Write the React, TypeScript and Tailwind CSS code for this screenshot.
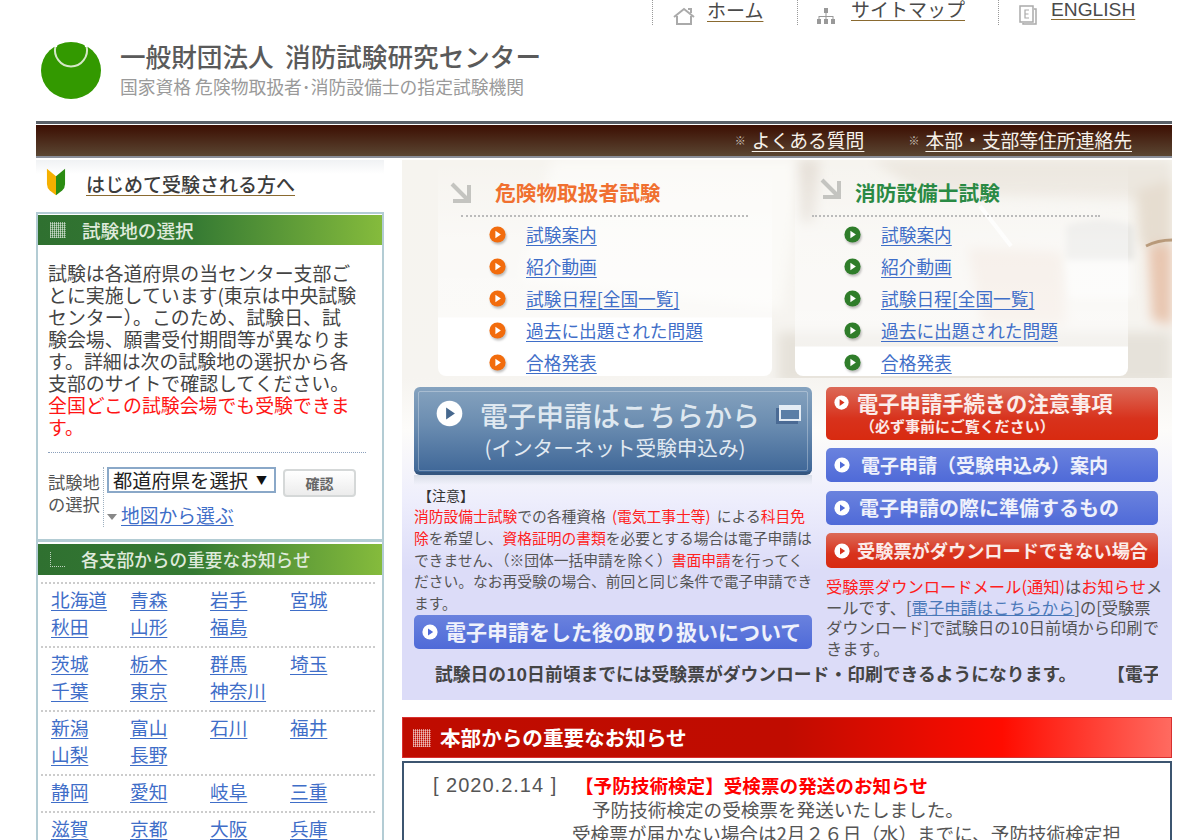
const jp = "font-['Noto_Sans_CJK_JP','Noto_Sans',sans-serif]";

function Play({ color = "#ffffff", fg = "#3f63c8", size = 18 }: { color?: string; fg?: string; size?: number }) {
  return (
    <svg width={size} height={size} viewBox="0 0 20 20" className="shrink-0">
      <circle cx="10" cy="10" r="9.5" fill={color} />
      <path d="M7.5 5.5 L14 10 L7.5 14.5 Z" fill={fg} />
    </svg>
  );
}

function Dots({ w = 16, h = 16 }: { w?: number; h?: number }) {
  return (
    <div
      className="shrink-0 bg-[repeating-linear-gradient(90deg,rgba(255,255,255,0.55)_0_1px,transparent_1px_2px),repeating-linear-gradient(0deg,rgba(255,255,255,0.35)_0_1px,transparent_1px_2px)]"
      style={{ width: w, height: h }}
    />
  );
}

const regionGroups = [
  [["北海道", "青森", "岩手", "宮城"], ["秋田", "山形", "福島"]],
  [["茨城", "栃木", "群馬", "埼玉"], ["千葉", "東京", "神奈川"]],
  [["新潟", "富山", "石川", "福井"], ["山梨", "長野"]],
  [["静岡", "愛知", "岐阜", "三重"]],
  [["滋賀", "京都", "大阪", "兵庫"]],
];

function ExamList({ orange }: { orange: boolean }) {
  const items = ["試験案内", "紹介動画", "試験日程[全国一覧]", "過去に出題された問題", "合格発表"];
  return (
    <ul className="flex flex-col gap-[6px]">
      {items.map((t) => (
        <li key={t} className="flex h-[26px] items-center text-[17.7px]">
          <span className="drop-shadow-[1px_2px_1px_rgba(0,0,0,0.25)]">
            <Play color={orange ? "#f26c0d" : "#2f7d2a"} fg="#ffffff" size={17} />
          </span>
          <a className="ml-[20px] text-[#3f6ec8] underline underline-offset-[3px]">{t}</a>
        </li>
      ))}
    </ul>
  );
}

function SmallBtn({ children, red, cls }: { children: React.ReactNode; red?: boolean; cls: string }) {
  return (
    <div
      className={`flex items-center rounded-[5px] pl-[8px] font-bold text-white/90 ${cls} ${
        red
          ? "bg-[linear-gradient(180deg,#dc6a58_0%,#d8321c_60%,#d82a10_100%)]"
          : "bg-[linear-gradient(180deg,#6a82de_0%,#4f6ad8_100%)]"
      }`}
    >
      {children}
    </div>
  );
}

function Arrow() {
  return (
    <svg width="21" height="21" viewBox="0 0 21 21" fill="none" stroke="currentColor" strokeWidth="4" className="block">
      <path d="M2 2 L18 18" />
      <path d="M19 3 V19 H3" />
    </svg>
  );
}

export default function App() {
  return (
    <div className={`${jp} h-[840px] w-[1200px] overflow-hidden bg-white text-[#444]`}>
      <div className="ml-[36px] w-[1136px]">
        {/* top nav */}
        <div className="flex h-[25px] text-[19px] text-[#4a4a4a]">
          <div className="ml-[616px] flex h-[25px] w-[145px] items-start border-l border-dotted border-[#999] pl-[20px]">
            <svg width="22" height="20" viewBox="0 0 22 20" className="mt-[6px]" fill="none" stroke="#aaa" strokeWidth="2">
              <path d="M1 11 L11 3 L21 11" />
              <path d="M4 10 V18 H18 V10" />
              <path d="M15 3 H18 V7" />
            </svg>
            <a className="-mt-[2px] ml-[12px] leading-[24px] underline decoration-[#8a6a30] underline-offset-[3px]">ホーム</a>
          </div>
          <div className="flex h-[25px] w-[201px] items-start border-l border-dotted border-[#999] pl-[18px]">
            <svg width="20" height="18" viewBox="0 0 20 18" className="mt-[7px]" fill="#999">
              <rect x="8" y="1" width="4" height="5" />
              <rect x="1" y="12" width="4" height="5" />
              <rect x="8" y="12" width="4" height="5" />
              <rect x="15" y="12" width="4" height="5" />
              <path d="M9.5 6 h1 v3 h7 v3 h-1 v-2 h-6 v2 h-1 v-2 h-6 v2 h-1 v-3 h7 z" />
            </svg>
            <a className="-mt-[3px] ml-[15px] leading-[24px] underline decoration-[#8a6a30] underline-offset-[3px]">サイトマップ</a>
          </div>
          <div className="flex h-[25px] items-start border-l border-dotted border-[#999] pl-[20px]">
            <svg width="18" height="20" viewBox="0 0 18 20" className="mt-[5px]" fill="none" stroke="#aaa" strokeWidth="1.5">
              <rect x="1" y="1" width="13" height="16" fill="#fff" />
              <path d="M15 4 H17 V19 H4 V18" />
              <path d="M10 5 H6 V13 H10 M6 9 H9.5" strokeWidth="1.2" />
            </svg>
            <a className="-mt-[2px] ml-[14px] font-['Liberation_Sans',sans-serif] text-[19.2px] leading-[24px] underline decoration-[#8a6a30] underline-offset-[3px]">ENGLISH</a>
          </div>
        </div>

        {/* logo */}
        <div className="flex h-[96px] items-start pl-[5px] pt-[16px]">
          <svg width="60" height="58" viewBox="0 0 60 58" className="shrink-0">
            <ellipse cx="30" cy="29.5" rx="30" ry="28.5" fill="#339900" />
            <path d="M14.5 5 A 16 16.5 0 1 0 45.5 5" fill="none" stroke="#d6e8c8" strokeWidth="2" />
            <path d="M11 0 L17 0 L16 6 L13.5 6 Z" fill="#ffffff" />
            <path d="M49 0 L43 0 L44 6 L46.5 6 Z" fill="#ffffff" />
          </svg>
          <div className="ml-[19px]">
            <div className="whitespace-nowrap text-[25.6px] font-medium leading-[30px] text-[#5a5a5a]">一般財団法人&nbsp;&nbsp;消防試験研究センター</div>
            <div className="mt-[3px] whitespace-nowrap text-[17.8px] leading-[24px] text-[#9a9a9a]">国家資格 危険物取扱者･消防設備士の指定試験機関</div>
          </div>
        </div>

        {/* dark bar */}
        <div className="h-[3px] bg-[#5a6068]" />
        <div className="h-[1px] bg-white" />
        <div className="flex h-[31px] items-center justify-end bg-[linear-gradient(180deg,#3c0e02_0%,#5a4632_100%)] pr-[40px] text-[18.8px] text-[#f6f1ea]">
          <span className="mr-[6px] text-[11px] text-[#c8c0b8]">※</span>
          <a className="underline underline-offset-[3px]">よくある質問</a>
          <span className="ml-[44px] mr-[6px] text-[11px] text-[#c8c0b8]">※</span>
          <a className="underline underline-offset-[3px]">本部・支部等住所連絡先</a>
        </div>
        <div className="h-[2px] bg-[#8a8f9a]" />
        <div className="h-[2px] bg-white" />

        {/* columns */}
        <div className="flex items-start">
          {/* left column */}
          <div className="w-[348px] shrink-0">
            <div className="flex h-[52px] items-start bg-[linear-gradient(180deg,#f0f2f4_0px,#ffffff_14px)] pl-[10px] pt-[7px]">
              <svg width="20" height="30" viewBox="0 0 21 30">
                <path d="M1 1 L10.5 9 V29 L4 24 Q1 21 1 17 Z" fill="#f5b000" />
                <path d="M20 1 L10.5 9 V29 L17 24 Q20 21 20 17 Z" fill="#2b8c12" />
              </svg>
              <a className="ml-[20px] mt-[4px] text-[19px] font-medium leading-[26px] text-[#3c3c3c] underline decoration-[#8a6a30] underline-offset-[3px]">はじめて受験される方へ</a>
            </div>
            <div className="border-2 border-b-[3px] border-[#b3ccd4] pt-[1px]">
              <div className="flex h-[30px] items-center bg-[linear-gradient(90deg,#2f7030_0%,#357a33_45%,#85bb3c_100%)] pl-[12px] text-[18.6px] font-medium text-[#dfeadb]">
                <Dots />
                <span className="ml-[16px]">試験地の選択</span>
              </div>
              <div className="pl-[10px] pt-[17px]">
                <p className="whitespace-nowrap text-[18.9px] leading-[22px] text-[#444]">
                  試験は各道府県の当センター支部ご<br />
                  とに実施しています(東京は中央試験<br />
                  センター）。このため、試験日、試<br />
                  験会場、願書受付期間等が異なりま<br />
                  す。詳細は次の試験地の選択から各<br />
                  支部のサイトで確認してください。<br />
                  <span className="text-[#ff1414]">全国どこの試験会場でも受験できま<br />す。</span>
                </p>
                <div className="mt-[14px] w-[318px] border-t border-dotted border-[#8ba0bc]" />
                <div className="mt-[14px] flex pb-[12px]">
                  <div className="w-[55px] shrink-0 pt-[4px] text-[17.3px] leading-[22px] text-[#555]">
                    試験地<br />の選択
                  </div>
                  <div className="border-l border-dotted border-[#9db0c0] pl-[3px]">
                    <div className="flex items-start">
                      <div className="flex h-[26px] w-[169px] items-center border-2 border-[#8aa8c8] pl-[4px] text-[19.3px] text-[#222]">
                        <span className="whitespace-nowrap">都道府県を選択</span>
                        <span className="ml-[8px] text-[11px] leading-none text-[#111]">▼</span>
                      </div>
                      <button className="ml-[7px] mt-[2px] h-[28px] w-[73px] rounded-[4px] border-2 border-[#d5d8d8] bg-[linear-gradient(180deg,#ffffff,#ececec)] text-[14px] font-bold text-[#666]">確認</button>
                    </div>
                    <div className="mt-[6px] flex items-center">
                      <span className="mr-[4px] mt-[3px] h-0 w-0 border-x-[5px] border-t-[6px] border-x-transparent border-t-[#888]" />
                      <a className="text-[18.8px] leading-[24px] text-[#3f6ec8] underline underline-offset-[2px]">地図から選ぶ</a>
                    </div>
                  </div>
                </div>
              </div>
            </div>
            <div className="border-x-2 border-[#b3ccd4] pt-[2px]">
              <div className="flex h-[31px] items-center bg-[linear-gradient(90deg,#2f7030_0%,#357a33_45%,#85bb3c_100%)] pl-[12px] text-[17.7px] font-medium text-[#dfeadb]">
                <div className="h-[15px] w-[15px] shrink-0 border-b border-l border-dotted border-white/70" />
                <span className="ml-[16px]">各支部からの重要なお知らせ</span>
              </div>
              <div className="pt-[7px] text-[18.7px]">
                {regionGroups.map((g, i) => (
                  <div key={i} className="ml-[3px] mr-[7px] border-t-2 border-dotted border-[#ccc] pb-[7px] pl-[10px] pt-[1px]">
                    {g.map((row, j) => (
                      <div key={j} className="grid h-[27px] grid-cols-[79px_80px_80px_80px] items-center">
                        {row.map((p) => (
                          <a key={p} className="leading-[27px] text-[#3f6ec8] underline underline-offset-[3px]">{p}</a>
                        ))}
                      </div>
                    ))}
                  </div>
                ))}
              </div>
            </div>
          </div>

          {/* right column */}
          <div className="ml-[18px] w-[770px] shrink-0">
            <div className="relative h-[540px] overflow-hidden bg-[linear-gradient(180deg,#f6f4ef_0px,#f6f4f0_218px,#fdfcfa_270px,#eeeefc_340px,#dcdcf8_410px,#dcdcf8_540px)]">
              <svg className="absolute left-0 top-0" width="770" height="218" viewBox="0 0 770 218">
                <defs>
                  <filter id="soft"><feGaussianBlur stdDeviation="6" /></filter>
                  <filter id="softer"><feGaussianBlur stdDeviation="3" /></filter>
                </defs>
                <g filter="url(#soft)">
                  <path d="M150 0 L400 0 L380 150 L120 120 Z" fill="#fbfaf7" />
                  <path d="M395 0 L418 0 L412 62 L398 62 Z" fill="#e6e0d8" />
                  <path d="M470 0 L770 0 L770 40 L520 34 Z" fill="#ece7df" />
                  <path d="M734 30 L770 20 L770 90 L738 85 Z" fill="#e6ddd0" />
                  <path d="M566 88 L660 92 L664 165 L580 165 Z" fill="#f1e6dd" />
                  <path d="M746 86 L770 84 L770 165 L750 160 Z" fill="#e8c6b0" />
                  <path d="M376 172 L770 172 L770 224 L376 224 Z" fill="#e6e2da" />
                </g>
                <g filter="url(#softer)">
                  <path d="M664 66 Q698 54 732 66 L732 100 L664 100 Z" fill="#e8e7e4" />
                  <path d="M664 100 H732 V138 H668 Z" fill="#faf9f7" />
                </g>
                <path d="M578 46 L609 86" stroke="#ffffff" strokeWidth="4" opacity="0.85" />
                <path d="M744 86 Q756 80 770 80" stroke="#a8845f" strokeWidth="3" fill="none" opacity="0.75" />
              </svg>
              <div className="relative">
                {/* exam panels */}
                <div className="flex h-[216px] items-start pl-[36px]">
                  <div className="h-[216px] w-[334px] rounded-b-[8px] bg-[linear-gradient(180deg,rgba(255,255,255,0)_0px,rgba(255,255,255,0.45)_80px,rgba(255,255,255,0.55)_157px,#ffffff_158px)] pl-[23px]">
                    <div className="-ml-[11px] flex h-[55px] items-end">
                      <span className="pb-[12px] pr-[24px] text-[#c4c4c0]"><Arrow /></span>
                      <h2 className="pb-[7px] text-[20.7px] font-bold text-[#f07030]">危険物取扱者試験</h2>
                    </div>
                    <div className="w-[287px] border-t-2 border-dotted border-[#bbb]" />
                    <div className="ml-[28px] mt-[4px]"><ExamList orange /></div>
                  </div>
                  <div className="ml-[23px] h-[216px] w-[333px] rounded-b-[8px] bg-[linear-gradient(180deg,rgba(255,255,255,0)_0px,rgba(255,255,255,0.4)_80px,rgba(255,255,255,0.55)_186px,#ffffff_187px)]">
                    <div className="flex h-[55px] items-end pl-[25px]">
                      <span className="pb-[16px] pr-[14px] text-[#c4c4c0]"><Arrow /></span>
                      <h2 className="pb-[7px] text-[20.7px] font-bold text-[#2a8a44]">消防設備士試験</h2>
                    </div>
                    <div className="ml-[17px] w-[288px] border-t-2 border-dotted border-[#bbb]" />
                    <div className="ml-[49px] mt-[4px]"><ExamList orange={false} /></div>
                  </div>
                </div>

                <div className="flex pl-[12px] pt-[11px]">
                  {/* mid left */}
                  <div className="w-[398px] shrink-0">
                    <div className="relative flex h-[88px] flex-col items-center rounded-[6px] border-b-[3px] border-[#35567f] bg-[linear-gradient(180deg,#86a3bf_0%,#6a8cb0_45%,#3f6798_100%)] outline outline-1 -outline-offset-[5px] outline-white/30">
                      <div className="absolute left-[22px] top-[13px]"><Play color="#ffffff" fg="#46688e" size={27} /></div>
                      <div className="absolute right-[11px] top-[18px] h-[16px] w-[22px] border-2 border-t-[5px] border-[#e4ecf4] bg-[#5a7ea6] shadow-[-3px_3px_0_#4a6a94]" />
                      <div className="pl-[14px] pt-[10px] text-[28px] font-medium leading-[36px] text-[#dfe8f0]">電子申請はこちらから</div>
                      <div className="pl-[4px] text-[20.6px] leading-[28px] text-[#e2eaf2]">(インターネット受験申込み)</div>
                    </div>
                    <div className="h-[10px] bg-[linear-gradient(180deg,#d8dde8,transparent)]" />
                    <div className="pl-[4px] text-[14px] leading-[20px] text-[#333]">【注意】</div>
                    <p className="whitespace-nowrap text-[14.76px] leading-[21.8px] text-[#555]">
                      <span className="text-[#ff2020]">消防設備士試験</span>での各種資格 <span className="mx-[3px] text-[#ff2020]">(電気工事士等)</span> による<span className="text-[#ff2020]">科目免</span>
                      <br />
                      <span className="text-[#ff2020]">除</span>を希望し、<span className="text-[#ff2020]">資格証明の書類</span>を必要とする場合は電子申請は
                      <br />
                      できません、（※団体一括申請を除く）<span className="text-[#ff2020]">書面申請</span>を行ってく
                      <br />
                      ださい。なお再受験の場合、前回と同じ条件で電子申請でき
                      <br />
                      ます。
                    </p>
                    <SmallBtn cls="mt-[1px] h-[34px] text-[21px]">
                      <Play fg="#4f6ad8" size={16} />
                      <span className="ml-[7px] whitespace-nowrap">電子申請をした後の取り扱いについて</span>
                    </SmallBtn>
                  </div>
                  {/* mid right */}
                  <div className="ml-[14px] w-[332px] shrink-0">
                    <SmallBtn red cls="h-[53px] items-start pt-[3px]">
                      <div className="mt-[5px]"><Play fg="#d8321c" size={15} /></div>
                      <div className="ml-[8px]">
                        <div className="whitespace-nowrap text-[21.3px] leading-[26px]">電子申請手続きの注意事項</div>
                        <div className="ml-[3px] whitespace-nowrap text-[15px] leading-[20px]">（必ず事前にご覧ください）</div>
                      </div>
                    </SmallBtn>
                    <SmallBtn cls="mt-[8px] h-[34px] text-[19px]">
                      <Play fg="#4f6ad8" size={16} />
                      <span className="ml-[11px] whitespace-nowrap">電子申請（受験申込み）案内</span>
                    </SmallBtn>
                    <SmallBtn cls="mt-[9px] h-[34px] text-[20px]">
                      <Play fg="#4f6ad8" size={16} />
                      <span className="ml-[9px] whitespace-nowrap">電子申請の際に準備するもの</span>
                    </SmallBtn>
                    <SmallBtn red cls="mt-[8px] h-[35px] text-[18.2px]">
                      <Play fg="#d8321c" size={16} />
                      <span className="ml-[7px] whitespace-nowrap">受験票がダウンロードできない場合</span>
                    </SmallBtn>
                    <p className="mt-[8px] w-[340px] text-[16.3px] leading-[20.7px] text-[#555]">
                      <span className="text-[#ff2020]">受験票ダウンロードメール(通知)</span>は<span className="text-[#ff2020]">お知らせ</span>メールです、[<a className="text-[#4a78b8] underline">電子申請はこちらから</a>]の[受験票ダウンロード]で試験日の10日前頃から印刷できます。
                    </p>
                  </div>
                </div>
                {/* ticker */}
                <div className="ml-[12px] mt-[2px] w-[744px] overflow-hidden whitespace-nowrap pl-[21px] text-[17.8px] font-bold leading-[24px] text-[#444]">
                  試験日の10日前頃までには受験票がダウンロード・印刷できるようになります。<span className="ml-[40px]">【電子申請】</span>
                </div>
              </div>
            </div>

            {/* red news */}
            <div className="mt-[17px] flex h-[41px] items-center border border-[#d83030] bg-[linear-gradient(90deg,#bf0c00_0%,#c00c00_50%,#ff0c00_78%,#ff6a60_100%)] pl-[10px] text-[20.6px] font-bold text-white">
              <Dots w={18} h={18} />
              <span className="ml-[9px]">本部からの重要なお知らせ</span>
            </div>
            <div className="mt-[3px] border-2 border-[#3c5570] pl-[29px] pr-[20px] pt-[10px] text-[18.6px] leading-[24px] text-[#555]">
              <div className="flex whitespace-nowrap">
                <span className="w-[142px] shrink-0 font-['Liberation_Sans',sans-serif] text-[20px] tracking-[1px]">[ 2020.2.14 ]</span>
                <span className="font-bold text-[#ff0000]">【予防技術検定】受検票の発送のお知らせ</span>
              </div>
              <div className="whitespace-nowrap pl-[159px]">予防技術検定の受検票を発送いたしました。</div>
              <div className="whitespace-nowrap pl-[139px]">受検票が届かない場合は2月２６日（水）までに、予防技術検定担</div>
            </div>
          </div>
        </div>
      </div>
    </div>
  );
}
